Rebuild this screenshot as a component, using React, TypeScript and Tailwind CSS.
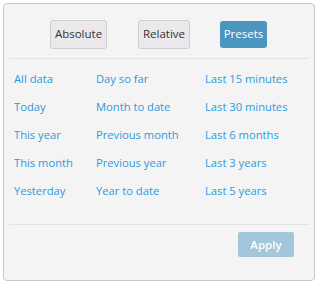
import React from "react";

const col1 = ["All data", "Today", "This year", "This month", "Yesterday"];
const col2 = ["Day so far", "Month to date", "Previous month", "Previous year", "Year to date"];
const col3 = ["Last 15 minutes", "Last 30 minutes", "Last 6 months", "Last 3 years", "Last 5 years"];

export default function App() {
  const font = { fontFamily: '"Open Sans", "Noto Sans", sans-serif' };
  return (
    <div className="w-[318px] h-[285px] bg-white p-[3px]" style={font}>
      <div className="w-[312px] h-[278px] rounded-[4px] border border-[#c8c8c8] bg-[#f4f4f4] flex flex-col px-[5px]">
        <div className="flex items-center h-[54px] pt-[13px] pb-[7px]">
          <button className="ml-[41px] h-[29px] w-[57px] rounded-[3px] border border-[#cfcfcf] bg-[#ebe9eb] text-[11.5px] text-[#333]">Absolute</button>
          <button className="ml-[31px] h-[29px] w-[52px] rounded-[3px] border border-[#cfcfcf] bg-[#ebe9eb] text-[11.5px] text-[#333]">Relative</button>
          <button className="ml-[30px] h-[27px] w-[47px] rounded-[3px] bg-[#4a96bf] text-[11.5px] text-white">Presets</button>
        </div>
        <div className="h-px bg-[#e2e2e2]" />
        <div className="grid grid-cols-[82px_109px_1fr] pl-[5px] pt-[6px] h-[165px]">
          {[col1, col2, col3].map((col, ci) => (
            <div key={ci} className="flex flex-col">
              {col.map((t) => (
                <div key={t} className="h-[28px] flex items-center text-[11.2px] text-[#2b9ae0]">{t}</div>
              ))}
            </div>
          ))}
        </div>
        <div className="h-px bg-[#e2e2e2]" />
        <div className="flex justify-end pt-[7px] pr-[15px]">
          <button className="h-[25px] w-[56px] rounded-[2px] bg-[#a3c7da] text-[11.5px] font-semibold text-white">Apply</button>
        </div>
      </div>
    </div>
  );
}
